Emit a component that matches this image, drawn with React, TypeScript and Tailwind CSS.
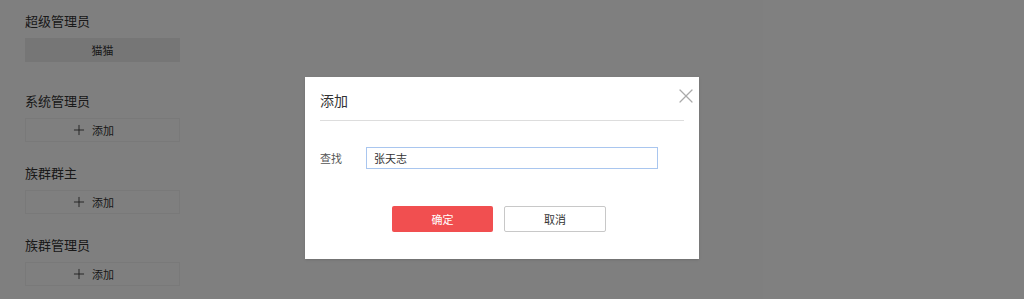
import { X, Plus } from "lucide-react";

const font = { fontFamily: '"Noto Sans CJK SC", "Noto Sans", sans-serif' };

function RoleGroup({ title, children, last }: { title: string; children: React.ReactNode; last?: boolean }) {
  return (
    <section className={last ? "" : "mb-[21px]"}>
      <h2 className="mb-[7px] h-[20px] text-[13px] leading-[20px] text-[#333]">{title}</h2>
      {children}
    </section>
  );
}

function AddTile() {
  return (
    <button
      type="button"
      className="flex h-[24px] w-[155px] items-center justify-center gap-[5px] border border-[#f2f2f2] bg-white pr-[20px] text-[11px] text-[#333]"
    >
      <Plus size={16} strokeWidth={1.3} />
      添加
    </button>
  );
}

export default function App() {
  return (
    <div className="relative h-[299px] w-[1024px] overflow-hidden bg-white" style={font}>
      <div className="px-[25px] pt-[11px]">
        <section className="mb-[29px]">
          <h2 className="mb-[7px] h-[20px] text-[13px] leading-[20px] text-[#333]">超级管理员</h2>
          <div className="flex h-[24px] w-[155px] items-center justify-center bg-[#ededed] text-[11px] text-[#333]">
            猫猫
          </div>
        </section>
        <RoleGroup title="系统管理员">
          <AddTile />
        </RoleGroup>
        <RoleGroup title="族群群主">
          <AddTile />
        </RoleGroup>
        <RoleGroup title="族群管理员" last>
          <AddTile />
        </RoleGroup>
      </div>

      <div className="absolute inset-0 bg-black/50 pl-[305px] pt-[77px]">
        <div className="h-[182px] w-[394px] bg-white px-[15px] shadow">
          <div className="flex h-[44px] items-center justify-between border-b border-[#ddd] pt-[4px]">
            <span className="text-[14px] text-[#333]">添加</span>
            <X size={24} strokeWidth={1.2} className="-mr-[14px] -mt-[10px] text-[#aaa]" />
          </div>
          <div className="mt-[26px] flex items-center">
            <span className="w-[46px] text-[11px] text-[#555]">查找</span>
            <input
              defaultValue="张天志"
              className="h-[22px] w-[292px] border border-[#a9c6ef] px-[7px] text-[11px] text-[#333] outline-none"
              style={font}
            />
          </div>
          <div className="mt-[37px] flex justify-center gap-[11px] pr-[6px]">
            <button type="button" className="h-[26px] w-[101px] rounded-[2px] bg-[#f14f50] text-[11px] text-white">
              确定
            </button>
            <button
              type="button"
              className="h-[26px] w-[102px] rounded-[2px] border border-[#c8c8c8] bg-white text-[11px] text-[#333]"
            >
              取消
            </button>
          </div>
        </div>
      </div>
    </div>
  );
}
